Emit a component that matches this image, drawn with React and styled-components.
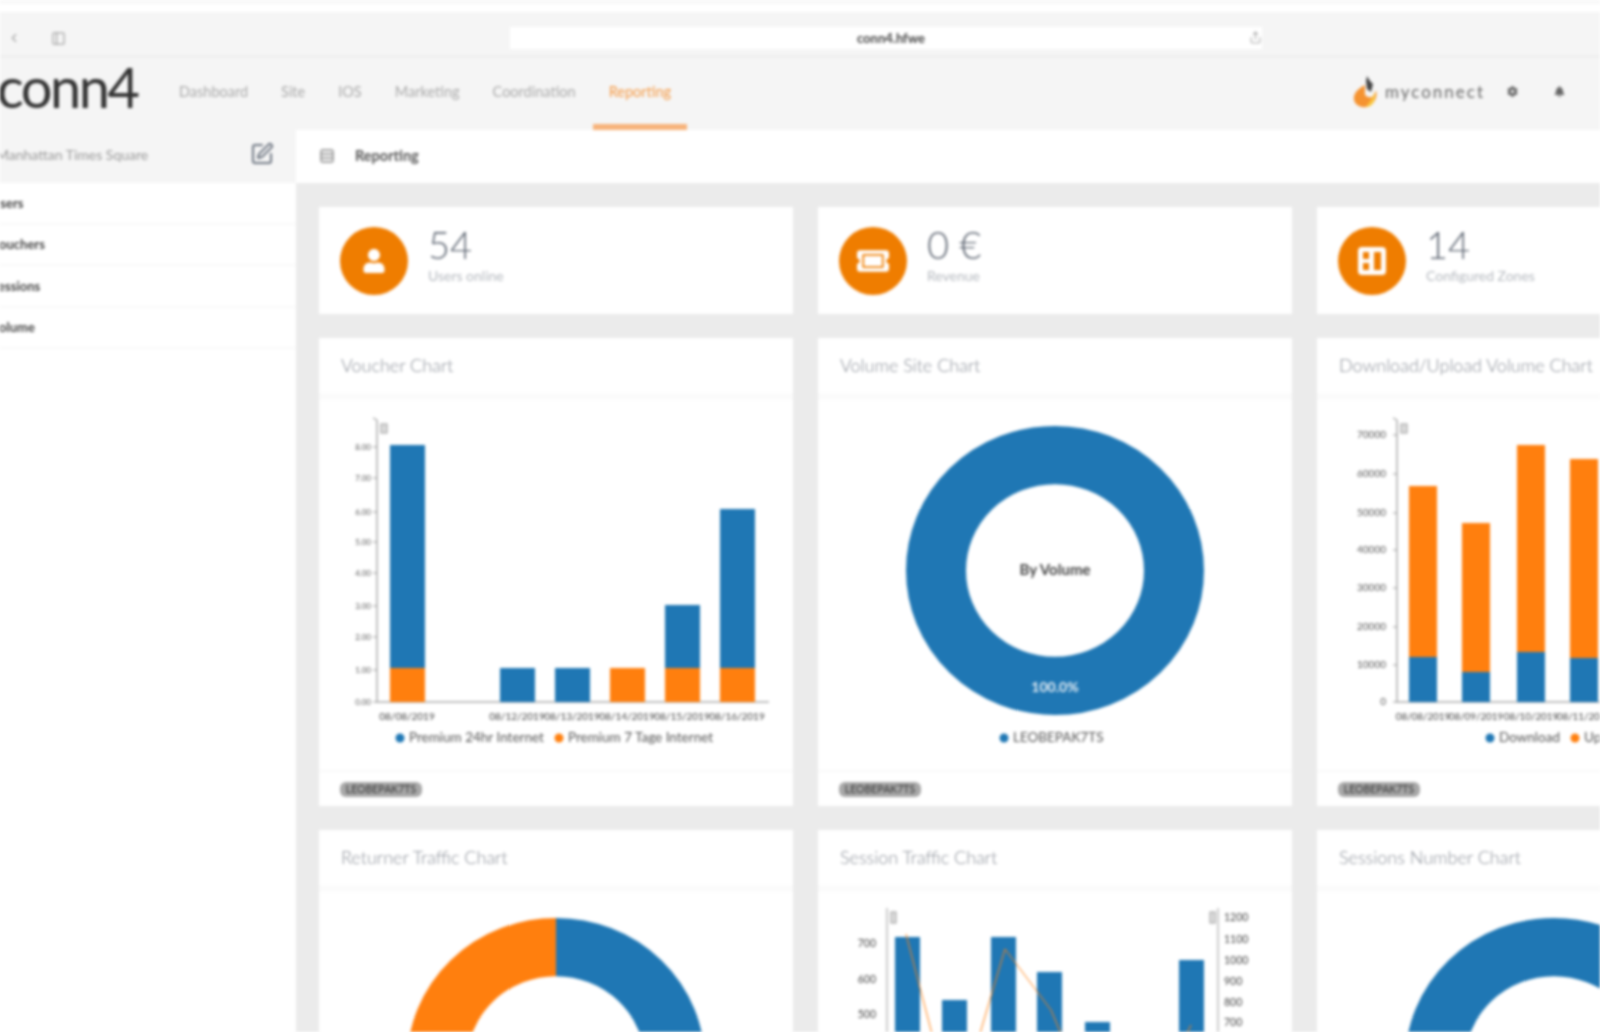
import React from 'react'
import styled, { createGlobalStyle } from 'styled-components'
import { FaUser, FaTicketAlt, FaCog, FaBell, FaPowerOff } from 'react-icons/fa'
import { SquarePen, Rows3, PanelLeft, ChevronLeft, Share } from 'lucide-react'

const BLUE = '#1f77b4'
const ORANGE = '#ff7f0e'

const GlobalStyle = createGlobalStyle`
    html, body { margin: 0; padding: 0; background: #fff; }
    body { font-family: Lato, "Open Sans", sans-serif; overflow: hidden; }
`

const Page = styled.div`
    width: 1600px;
    height: 1032px;
    overflow: hidden;
    display: flex;
    flex-direction: column;
    background: #fff;
    filter: blur(1.4px);
`

const TopStrip = styled.div`
    height: 4px;
    margin-bottom: 8px;
    background: #f8f8f8;
    flex: none;
`

const BrowserBar = styled.div`
    height: 46px;
    flex: none;
    display: flex;
    align-items: center;
    padding-top: 9px;
    box-sizing: border-box;
    background: #f5f5f5;
    border-bottom: 3px solid #efefef;
    color: #a5a5a5;
`

const BrowserButtons = styled.div`
    width: 510px;
    flex: none;
    display: flex;
    gap: 30px;
    padding-left: 7px;
    box-sizing: border-box;
`

const UrlBar = styled.div`
    width: 752px;
    height: 22px;
    background: #fff;
    display: flex;
    align-items: center;
    justify-content: center;
    position: relative;
    font-size: 13px;
    font-weight: 700;
    color: #444;
    padding-left: 10px;
    box-sizing: border-box;
`

const UrlIcon = styled.span`
    position: absolute;
    right: 0;
    top: 4px;
    color: #aaa;
    display: flex;
`

const NavBar = styled.div`
    height: 72px;
    flex: none;
    display: flex;
    align-items: stretch;
    background: #f5f5f5;
`

const Logo = styled.div`
    width: 166px;
    margin-left: -3px;
    flex: none;
    font-size: 56px;
    line-height: 58px;
    letter-spacing: -2.5px;
    font-weight: 400;
    color: #333;
`

const NavItem = styled.div`
    padding: 0 16px;
    display: flex;
    align-items: center;
    font-size: 14.5px;
    color: ${props => props.active ? '#f49a45' : '#a9a9a9'};
    border-bottom: 6px solid ${props => props.active ? '#f7b37a' : 'transparent'};
    margin-right: 1px;
`

const NavRight = styled.div`
    margin-left: auto;
    margin-right: -48px;
    margin-bottom: 6px;
    display: flex;
    align-items: center;
    color: #555;
`

const Account = styled.span`
    font-size: 17px;
    letter-spacing: 2px;
    color: #666;
    margin-left: 5px;
    margin-right: 22px;
`

const NavDot = styled.span`
    width: 47px;
    display: flex;
    justify-content: flex-start;
    color: #666;
`

const Main = styled.div`
    flex: 1;
    min-height: 0;
    display: flex;
`

const Sidebar = styled.aside`
    width: 296px;
    flex: none;
    background: #fff;
`

const SidebarHead = styled.div`
    height: 53px;
    box-sizing: border-box;
    background: #f5f5f5;
    display: flex;
    align-items: center;
    justify-content: space-between;
    padding: 0 22px 5px 0;
    font-size: 14px;
    color: #999;
    white-space: nowrap;
`

const SiteName = styled.span`
    margin-left: -4px;
`

const EditIcon = styled.span`
    color: #6c7480;
    display: flex;
`

const SideRow = styled.div`
    height: 41.5px;
    box-sizing: border-box;
    display: flex;
    align-items: center;
    border-bottom: 2px solid #f9f9f9;
    font-size: 13px;
    font-weight: 700;
    color: #444;
`

const SideLabel = styled.span`
    margin-left: -9px;
`

const Content = styled.main`
    flex: 1;
    min-width: 0;
    background: #ebebeb;
    overflow: hidden;
`

const ContentHead = styled.div`
    height: 53px;
    box-sizing: border-box;
    background: #fff;
    display: flex;
    align-items: center;
    gap: 20px;
    padding: 0 0 2px 23px;
    font-size: 14.5px;
    font-weight: 700;
    color: #555;
`

const HeadIcon = styled.span`
    color: #888;
    display: flex;
`

const Grid = styled.div`
    display: grid;
    grid-template-columns: repeat(3, 474px);
    grid-auto-rows: min-content;
    gap: 24px 25px;
    padding: 24px 0 0 23px;
`

const StatCard = styled.section`
    height: 107px;
    background: #fff;
    display: flex;
    align-items: center;
    gap: 20px;
    padding-left: 21px;
    box-sizing: border-box;
`

const StatCircle = styled.div`
    width: 68px;
    height: 68px;
    border-radius: 50%;
    background: #ef7d00;
    color: #fff;
    display: flex;
    align-items: center;
    justify-content: center;
    flex: none;
`

const StatText = styled.div`
    display: flex;
    flex-direction: column;
    margin-top: -20px;
`

const StatValue = styled.div`
    font-size: 38px;
    line-height: 50px;
    font-weight: 300;
    color: #5f6773;
`

const StatLabel = styled.div`
    font-size: 14px;
    line-height: 14px;
    color: #b4b8be;
`

const ChartCard = styled.section`
    height: 468px;
    background: #fff;
    display: flex;
    flex-direction: column;
`

const CardHead = styled.header`
    height: 53px;
    flex: none;
    box-sizing: content-box;
    padding: 0 0 2px 22px;
    border-bottom: 7px solid #fbfbfb;
    display: flex;
    align-items: center;
    font-size: 18px;
    font-weight: 300;
    color: #858a93;
    white-space: nowrap;
`

const ChartBody = styled.div`
    flex: 1;
    min-height: 0;
`

const CardFoot = styled.footer`
    height: 36px;
    flex: none;
    box-sizing: border-box;
    border-top: 2px solid #f9f9f9;
    display: flex;
    align-items: center;
    padding-left: 21px;
`

const Tag = styled.span`
    width: 82px;
    height: 15px;
    border-radius: 6px;
    background: #a8a8a8;
    color: #333;
    font-size: 10.5px;
    line-height: 15px;
    text-align: center;
    white-space: nowrap;
    overflow: hidden;
`

const ChartSvg = styled.svg`
    display: block;
    font-family: Lato, sans-serif;
    overflow: hidden;
`

const voucherBars = [
    { x: 71, label: '08/08/2019', blue: 45, orange: 268 },
    { x: 181, label: '08/12/2019', blue: 268 },
    { x: 236, label: '08/13/2019', blue: 268 },
    { x: 291, label: '08/14/2019', orange: 268 },
    { x: 346, label: '08/15/2019', blue: 205, orange: 268 },
    { x: 401, label: '08/16/2019', blue: 109, orange: 268 },
]

const trafficBars = [
    { x: 92, label: '08/08/2019', top: 86, split: 257 },
    { x: 145, label: '08/09/2019', top: 123, split: 272 },
    { x: 200, label: '08/10/2019', top: 45, split: 252 },
    { x: 253, label: '08/11/2019', top: 59, split: 258 },
    { x: 307, label: '08/12/2019', top: 70, split: 260 },
]

const sessionBars = [
    { x: 77, top: 45 },
    { x: 124, top: 108 },
    { x: 173, top: 45 },
    { x: 219, top: 80 },
    { x: 267, top: 130 },
    { x: 361, top: 68 },
]

function Axis({ x, top, bottom, right, ticks, labels, labelEnd, fontSize }) {
    return (
        <g>
            <path d={`M${x} ${top}V${bottom}H${right}`} fill="none" stroke="#aaa" strokeWidth="1.5" />
            <path d={`M${x - 4} ${top - 2}L${x} ${top}`} stroke="#888" />
            <rect x={x + 4} y={top + 4} width="6" height="9" fill="#ddd" stroke="#999" />
            {ticks.map((y, i) =>
                <g key={y}>
                    <path d={`M${x - 4} ${y}H${x}`} stroke="#999" />
                    <text x={labelEnd} y={y + 3} fontSize={fontSize} fill="#555" textAnchor="end">{labels[i]}</text>
                </g>
            )}
        </g>
    )
}

function Legend({ items }) {
    return items.map(item =>
        <g key={item.label}>
            <circle cx={item.x} cy={338} r="4.5" fill={item.color} />
            <text x={item.x + 9} y={342} fontSize="13.5" fill="#555">{item.label}</text>
        </g>
    )
}

function VoucherChart() {
    const ticks = [302, 270, 237, 206, 173, 142, 112, 78, 47]
    const labels = ['0.00', '1.00', '2.00', '3.00', '4.00', '5.00', '6.00', '7.00', '8.00']
    return (
        <ChartSvg width="474" height="368">
            <Axis x={58} top={20} bottom={302} right={450} ticks={ticks} labels={labels} labelEnd={52} fontSize="8" />
            {voucherBars.map(bar =>
                <g key={bar.x}>
                    {bar.blue && <rect x={bar.x} y={bar.blue} width="35" height={(bar.orange ? 268 : 302) - bar.blue} fill={BLUE} />}
                    {bar.orange && <rect x={bar.x} y={268} width="35" height="34" fill={ORANGE} />}
                    <text x={bar.x + 17} y={320} fontSize="10" fill="#444" textAnchor="middle">{bar.label}</text>
                </g>
            )}
            <Legend items={[
                { x: 81, color: BLUE, label: 'Premium 24hr Internet' },
                { x: 240, color: ORANGE, label: 'Premium 7 Tage Internet' },
            ]} />
        </ChartSvg>
    )
}

function TrafficChart() {
    const ticks = [302, 265, 227, 188, 150, 113, 74, 35]
    const labels = ['0', '10000', '20000', '30000', '40000', '50000', '60000', '70000']
    return (
        <ChartSvg width="474" height="368">
            <Axis x={80} top={20} bottom={302} right={450} ticks={ticks} labels={labels} labelEnd={69} fontSize="10" />
            {trafficBars.map(bar =>
                <g key={bar.x}>
                    <rect x={bar.x} y={bar.top} width="28" height={bar.split - bar.top} fill={ORANGE} />
                    <rect x={bar.x} y={bar.split} width="28" height={302 - bar.split} fill={BLUE} />
                    <text x={bar.x + 14} y={320} fontSize="9.8" fill="#444" textAnchor="middle">{bar.label}</text>
                </g>
            )}
            <Legend items={[
                { x: 173, color: BLUE, label: 'Download' },
                { x: 258, color: ORANGE, label: 'Upload' },
            ]} />
        </ChartSvg>
    )
}

function SessionChart() {
    const left = [52, 88, 123, 159, 195, 230, 266]
    const right = [26, 48, 69, 90, 111, 131, 152, 173, 194, 215, 236, 257]
    return (
        <ChartSvg width="474" height="368">
            <path d="M69 16V302M400 16V302" stroke="#aaa" strokeWidth="1.2" fill="none" />
            <rect x="73" y="20" width="5" height="11" fill="#ddd" stroke="#999" />
            <rect x="392" y="20" width="5" height="11" fill="#ddd" stroke="#999" />
            {left.map((y, i) =>
                <text key={y} x={58} y={y + 3} fontSize="10.5" fill="#444" textAnchor="end">{700 - i * 100}</text>
            )}
            {right.map((y, i) =>
                <text key={y} x={406} y={y + 3} fontSize="10.5" fill="#444">{1200 - i * 100}</text>
            )}
            {sessionBars.map(bar =>
                <rect key={bar.x} x={bar.x} y={bar.top} width="25" height={302 - bar.top} fill={BLUE} />
            )}
            <polyline points="88,42 120,165 155,165 187,57 233,118 255,170 340,200 373,133" fill="none" stroke={ORANGE} strokeWidth="1" />
        </ChartSvg>
    )
}

function Donut({ split, center, slice, legend }) {
    return (
        <ChartSvg width="474" height="368">
            <g transform="translate(237 170.5) scale(1 0.97)">
                {split
                    ? <>
                        <path d="M0 -119A119 119 0 0 1 0 119" fill="none" stroke={BLUE} strokeWidth="60" />
                        <path d="M0 119A119 119 0 0 1 0 -119" fill="none" stroke={ORANGE} strokeWidth="60" />
                    </>
                    : <circle r="119" fill="none" stroke={BLUE} strokeWidth="60" />}
            </g>
            {center && <text x="237" y="175" fontSize="15" fontWeight="700" fill="#444" textAnchor="middle">{center}</text>}
            {slice && <text x="237" y="292" fontSize="14" fontWeight="700" fill="#e6eef5" textAnchor="middle">{slice}</text>}
            {legend && <Legend items={[{ x: 186, color: BLUE, label: legend }]} />}
        </ChartSvg>
    )
}

function ZonesIcon() {
    return (
        <svg width="30" height="30" viewBox="0 0 30 30">
            <rect x="1" y="1" width="28" height="28" rx="4" fill="#fff" />
            <rect x="6" y="6" width="6" height="7" fill="#ef7d00" />
            <rect x="6" y="17" width="6" height="7" fill="#ef7d00" />
            <rect x="17" y="6" width="7" height="18" fill="#ef7d00" />
        </svg>
    )
}

function Flame() {
    return (
        <svg width="28" height="36" viewBox="0 0 28 36">
            <path d="M13 12C5 16 1 21 2 27c1 5 7 8 12 7 8-2 12-9 10-17-1 6-5 10-11 5z" fill="#f59331" />
            <path d="M14 34c6 0 10-6 9-15-2 6-6 10-9 15z" fill="#f9c73d" />
            <path d="M15 3l3 5 3 3-2 8-4-3-1-8z" fill="#444" />
        </svg>
    )
}

function ChartPanel({ title, children }) {
    return (
        <ChartCard>
            <CardHead>{title}</CardHead>
            <ChartBody>{children}</ChartBody>
            <CardFoot><Tag>LEOBEPAK7TS</Tag></CardFoot>
        </ChartCard>
    )
}

const navItems = ['Dashboard', 'Site', 'IOS', 'Marketing', 'Coordination', 'Reporting']
const sideItems = ['Users', 'Vouchers', 'Sessions', 'Volume']

export default function App() {
    return (
        <Page>
            <GlobalStyle />
            <TopStrip />
            <BrowserBar>
                <BrowserButtons>
                    <ChevronLeft size={14} />
                    <PanelLeft size={15} />
                </BrowserButtons>
                <UrlBar>
                    conn4.hfwe
                    <UrlIcon><Share size={13} /></UrlIcon>
                </UrlBar>
            </BrowserBar>
            <NavBar>
                <Logo>conn4</Logo>
                {navItems.map(item =>
                    <NavItem key={item} active={item === 'Reporting'}>{item}</NavItem>
                )}
                <NavRight>
                    <Flame />
                    <Account>myconnect</Account>
                    <NavDot><FaCog size={11} /></NavDot>
                    <NavDot><FaBell size={11} /></NavDot>
                    <NavDot><FaPowerOff size={11} /></NavDot>
                </NavRight>
            </NavBar>
            <Main>
                <Sidebar>
                    <SidebarHead>
                        <SiteName>Manhattan Times Square</SiteName>
                        <EditIcon><SquarePen size={24} /></EditIcon>
                    </SidebarHead>
                    {sideItems.map(item =>
                        <SideRow key={item}><SideLabel>{item}</SideLabel></SideRow>
                    )}
                </Sidebar>
                <Content>
                    <ContentHead>
                        <HeadIcon><Rows3 size={16} /></HeadIcon>
                        Reporting
                    </ContentHead>
                    <Grid>
                        <StatCard>
                            <StatCircle><FaUser size={24} /></StatCircle>
                            <StatText>
                                <StatValue>54</StatValue>
                                <StatLabel>Users online</StatLabel>
                            </StatText>
                        </StatCard>
                        <StatCard>
                            <StatCircle><FaTicketAlt size={32} /></StatCircle>
                            <StatText>
                                <StatValue>0 €</StatValue>
                                <StatLabel>Revenue</StatLabel>
                            </StatText>
                        </StatCard>
                        <StatCard>
                            <StatCircle><ZonesIcon /></StatCircle>
                            <StatText>
                                <StatValue>14</StatValue>
                                <StatLabel>Configured Zones</StatLabel>
                            </StatText>
                        </StatCard>
                        <ChartPanel title="Voucher Chart"><VoucherChart /></ChartPanel>
                        <ChartPanel title="Volume Site Chart">
                            <Donut center="By Volume" slice="100.0%" legend="LEOBEPAK7TS" />
                        </ChartPanel>
                        <ChartPanel title="Download/Upload Volume Chart"><TrafficChart /></ChartPanel>
                        <ChartPanel title="Returner Traffic Chart"><Donut split /></ChartPanel>
                        <ChartPanel title="Session Traffic Chart"><SessionChart /></ChartPanel>
                        <ChartPanel title="Sessions Number Chart"><Donut /></ChartPanel>
                    </Grid>
                </Content>
            </Main>
        </Page>
    )
}
